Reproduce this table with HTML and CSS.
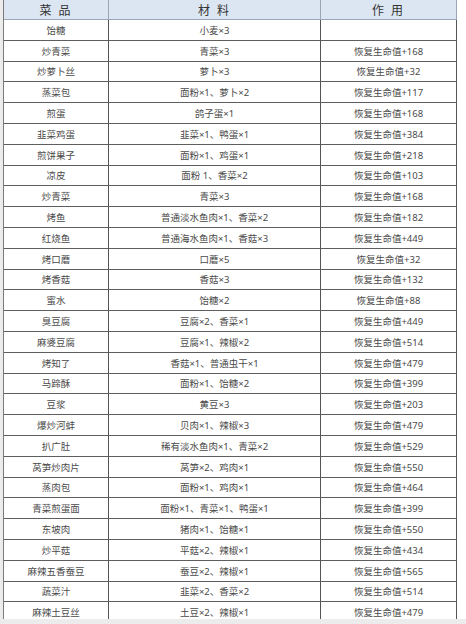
FILE: index.html
```html
<!DOCTYPE html>
<html lang="zh">
<head>
<meta charset="utf-8">
<link rel="stylesheet" href="styles.css">
</head>
<body>
<div class="sheet">
  <div class="table">
    <div class="cell head">菜&nbsp;品</div>
    <div class="cell head">材&nbsp;料</div>
    <div class="cell head">作&nbsp;用</div>

    <div class="cell">饴糖</div><div class="cell">小麦×3</div><div class="cell"></div>
    <div class="cell">炒青菜</div><div class="cell">青菜×3</div><div class="cell">恢复生命值+168</div>
    <div class="cell">炒萝卜丝</div><div class="cell">萝卜×3</div><div class="cell">恢复生命值+32</div>
    <div class="cell">蒸菜包</div><div class="cell">面粉×1、萝卜×2</div><div class="cell">恢复生命值+117</div>
    <div class="cell">煎蛋</div><div class="cell">鸽子蛋×1</div><div class="cell">恢复生命值+168</div>
    <div class="cell">韭菜鸡蛋</div><div class="cell">韭菜×1、鸭蛋×1</div><div class="cell">恢复生命值+384</div>
    <div class="cell">煎饼果子</div><div class="cell">面粉×1、鸡蛋×1</div><div class="cell">恢复生命值+218</div>
    <div class="cell">凉皮</div><div class="cell">面粉 1、香菜×2</div><div class="cell">恢复生命值+103</div>
    <div class="cell">炒青菜</div><div class="cell">青菜×3</div><div class="cell">恢复生命值+168</div>
    <div class="cell">烤鱼</div><div class="cell">普通淡水鱼肉×1、香菜×2</div><div class="cell">恢复生命值+182</div>
    <div class="cell">红烧鱼</div><div class="cell">普通海水鱼肉×1、香菇×3</div><div class="cell">恢复生命值+449</div>
    <div class="cell">烤口蘑</div><div class="cell">口蘑×5</div><div class="cell">恢复生命值+32</div>
    <div class="cell">烤香菇</div><div class="cell">香菇×3</div><div class="cell">恢复生命值+132</div>
    <div class="cell">蜜水</div><div class="cell">饴糖×2</div><div class="cell">恢复生命值+88</div>
    <div class="cell">臭豆腐</div><div class="cell">豆腐×2、香菜×1</div><div class="cell">恢复生命值+449</div>
    <div class="cell">麻婆豆腐</div><div class="cell">豆腐×1、辣椒×2</div><div class="cell">恢复生命值+514</div>
    <div class="cell">烤知了</div><div class="cell">香菇×1、普通虫干×1</div><div class="cell">恢复生命值+479</div>
    <div class="cell">马蹄酥</div><div class="cell">面粉×1、饴糖×2</div><div class="cell">恢复生命值+399</div>
    <div class="cell">豆浆</div><div class="cell">黄豆×3</div><div class="cell">恢复生命值+203</div>
    <div class="cell">爆炒河蚌</div><div class="cell">贝肉×1、辣椒×3</div><div class="cell">恢复生命值+479</div>
    <div class="cell">扒广肚</div><div class="cell">稀有淡水鱼肉×1、青菜×2</div><div class="cell">恢复生命值+529</div>
    <div class="cell">莴笋炒肉片</div><div class="cell">莴笋×2、鸡肉×1</div><div class="cell">恢复生命值+550</div>
    <div class="cell">蒸肉包</div><div class="cell">面粉×1、鸡肉×1</div><div class="cell">恢复生命值+464</div>
    <div class="cell">青菜煎蛋面</div><div class="cell">面粉×1、青菜×1、鸭蛋×1</div><div class="cell">恢复生命值+399</div>
    <div class="cell">东坡肉</div><div class="cell">猪肉×1、饴糖×1</div><div class="cell">恢复生命值+550</div>
    <div class="cell">炒平菇</div><div class="cell">平菇×2、辣椒×1</div><div class="cell">恢复生命值+434</div>
    <div class="cell">麻辣五香蚕豆</div><div class="cell">蚕豆×2、辣椒×1</div><div class="cell">恢复生命值+565</div>
    <div class="cell">蔬菜汁</div><div class="cell">韭菜×2、香菜×2</div><div class="cell">恢复生命值+514</div>
    <div class="cell">麻辣土豆丝</div><div class="cell">土豆×2、辣椒×1</div><div class="cell">恢复生命值+479</div>
  </div>
</div>
</body>
</html>
```

FILE: styles.css
```css
html, body {
  margin: 0;
  padding: 0;
  background: #ececec;
}
body {
  width: 466px;
  height: 624px;
  overflow: hidden;
  font-family: "Noto Sans", "Noto Sans CJK SC", sans-serif;
}
.sheet {
  margin-left: 3px;
  width: 463px;
  height: 619px;
  overflow: hidden;
  background: #fff;
}
.table {
  display: grid;
  grid-template-columns: 105px 212px 136px;
  grid-template-rows: 20px;
  grid-auto-rows: 20.8px;
  border-left: 1px solid #7a7a7a;
  width: 454px;
}
.cell {
  display: flex;
  align-items: center;
  justify-content: center;
  border-right: 1px solid #555;
  border-bottom: 1px solid #5e5e5e;
  box-sizing: border-box;
  font-size: 9.5px;
  color: #4a4a4a;
  white-space: nowrap;
}
.head {
  background: #dce6f2;
  font-size: 12px;
  color: #333;
  letter-spacing: 2px;
  border-bottom: 1px solid #9aa6b4;
  border-right: 1px solid #9aa6b4;
}
```
